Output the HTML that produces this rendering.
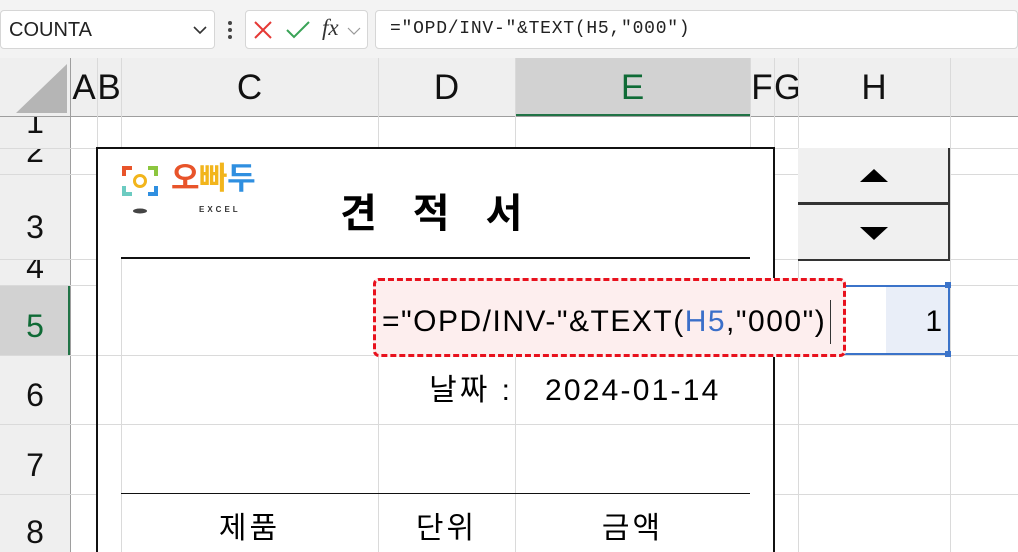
<!DOCTYPE html>
<html style="width:1018px;height:552px;overflow:hidden"><head><meta charset="utf-8">
<style>
*{margin:0;padding:0;box-sizing:border-box}
body{width:1018px;height:552px;overflow:hidden;background:#fff;position:relative;font-family:"Liberation Sans","Noto Sans CJK KR",sans-serif;color:#000}
.a{position:absolute}
.hdr{background:#efefef}
.vl{position:absolute;width:1px;background:#dadada}
.hl{position:absolute;height:1px;background:#dadada}
.ch{position:absolute;top:58px;height:59px;font-size:35px;line-height:60px;text-align:center;color:#111}
.rh{position:absolute;left:0;width:70px;font-size:32px;text-align:center;color:#111;overflow:hidden}
</style></head><body>
<div class="a" style="left:0;top:0;width:1018px;height:58px;background:#f3f3f3"></div>
<div class="a" style="left:0;top:10px;width:215px;height:39px;background:#fff;border:1px solid #d6d6d6;border-radius:4px"></div>
<div class="a" style="left:9px;top:19px;font-size:20px;color:#222">COUNTA</div>
<svg class="a" style="left:192px;top:24px" width="16" height="12"><path d="M2 3 L8 9 L14 3" fill="none" stroke="#333" stroke-width="1.6"/></svg>
<div class="a" style="left:228px;top:21px;width:4px;height:4px;background:#444;border-radius:2px"></div>
<div class="a" style="left:228px;top:28px;width:4px;height:4px;background:#444;border-radius:2px"></div>
<div class="a" style="left:228px;top:35px;width:4px;height:4px;background:#444;border-radius:2px"></div>
<div class="a" style="left:245px;top:10px;width:123px;height:39px;background:#fff;border:1px solid #d6d6d6;border-radius:4px"></div>
<svg class="a" style="left:253px;top:20px" width="20" height="20"><path d="M2 2 L18 18 M18 2 L2 18" stroke="#e53935" stroke-width="2"/></svg>
<svg class="a" style="left:285px;top:20px" width="26" height="20"><path d="M2 10 L9 17 L24 2" fill="none" stroke="#3aa357" stroke-width="2"/></svg>
<div class="a" style="left:322px;top:15px;font-family:'Liberation Serif',serif;font-style:italic;font-size:23px;color:#333">fx</div>
<svg class="a" style="left:347px;top:26px" width="14" height="10"><path d="M1 2 L7 8 L13 2" fill="none" stroke="#999" stroke-width="1.2"/></svg>
<div class="a" style="left:375px;top:10px;width:643px;height:39px;background:#fff;border:1px solid #d6d6d6;border-radius:4px"></div>
<div class="a" style="left:390px;top:19px;font-family:'Liberation Mono',monospace;font-size:18px;letter-spacing:0.75px;color:#222">="OPD/INV-"&amp;TEXT(H5,"000")</div>

<div class="a hdr" style="left:0;top:58px;width:1018px;height:59px"></div>
<div class="a" style="left:515px;top:58px;width:235px;height:59px;background:#d2d2d2"></div>
<div class="a" style="left:515px;top:114px;width:235px;height:3px;background:#217346"></div>
<svg class="a" style="left:16px;top:64px" width="52" height="50"><path d="M51 0 L51 49 L0 49 Z" fill="#b5b5b5"/></svg>
<div class="a" style="left:0;top:116px;width:1018px;height:1px;background:#9e9e9e"></div>
<div class="a" style="left:70px;top:58px;width:1px;height:494px;background:#9e9e9e"></div>
<div class="ch" style="left:71px;width:26px">A</div>
<div class="ch" style="left:97px;width:24px">B</div>
<div class="ch" style="left:121px;width:257px">C</div>
<div class="ch" style="left:378px;width:137px">D</div>
<div class="ch" style="left:515px;width:235px;color:#0f6b36">E</div>
<div class="ch" style="left:750px;width:24px">F</div>
<div class="ch" style="left:774px;width:24px">G</div>
<div class="ch" style="left:798px;width:152px">H</div>
<div class="vl" style="left:97px;top:58px;height:494px"></div>
<div class="vl" style="left:121px;top:58px;height:494px"></div>
<div class="vl" style="left:378px;top:58px;height:494px"></div>
<div class="vl" style="left:515px;top:58px;height:494px"></div>
<div class="vl" style="left:750px;top:58px;height:494px"></div>
<div class="vl" style="left:774px;top:58px;height:494px"></div>
<div class="vl" style="left:798px;top:58px;height:494px"></div>
<div class="vl" style="left:950px;top:58px;height:494px"></div>

<div class="a hdr" style="left:0;top:117px;width:70px;height:435px"></div>
<div class="a" style="left:0;top:285px;width:70px;height:70px;background:#d2d2d2"></div>
<div class="a" style="left:68px;top:285px;width:2px;height:70px;background:#217346"></div>
<div class="a" style="left:70px;top:117px;width:1px;height:435px;background:#9e9e9e"></div>
<div class="rh" style="top:117px;height:31px;line-height:10px">1</div>
<div class="rh" style="top:148px;height:26px;line-height:6px">2</div>
<div class="rh" style="top:174px;height:85px;line-height:106px">3</div>
<div class="rh" style="top:259px;height:26px;line-height:16px">4</div>
<div class="rh" style="top:285px;height:70px;line-height:82px;color:#0f6b36">5</div>
<div class="rh" style="top:355px;height:69px;line-height:80px">6</div>
<div class="rh" style="top:424px;height:70px;line-height:82px">7</div>
<div class="rh" style="top:494px;height:58px;line-height:76px">8</div>
<div class="hl" style="left:0;top:148px;width:1018px"></div>
<div class="hl" style="left:0;top:174px;width:1018px"></div>
<div class="hl" style="left:0;top:259px;width:1018px"></div>
<div class="hl" style="left:0;top:285px;width:1018px"></div>
<div class="hl" style="left:0;top:355px;width:1018px"></div>
<div class="hl" style="left:0;top:424px;width:1018px"></div>
<div class="hl" style="left:0;top:494px;width:1018px"></div>

<div class="a" style="left:98px;top:149px;width:675px;height:403px;background:#fff"></div>
<div class="a" style="left:96px;top:147px;width:679px;height:420px;border:2px solid #111"></div>
<div class="vl" style="left:121px;top:259px;height:293px"></div>
<div class="vl" style="left:378px;top:355px;height:197px"></div>
<div class="vl" style="left:515px;top:355px;height:197px"></div>
<div class="hl" style="left:98px;top:355px;width:675px"></div>
<div class="hl" style="left:98px;top:424px;width:675px"></div>
<div class="a" style="left:121px;top:257px;width:629px;height:2px;background:#111"></div>
<div class="a" style="left:121px;top:493px;width:629px;height:1px;background:#111"></div>

<svg class="a" style="left:121px;top:163px" width="42" height="56">
<path d="M3 13 V5 H11" fill="none" stroke="#e8542a" stroke-width="4"/>
<path d="M27 5 H35 V13" fill="none" stroke="#8cc63f" stroke-width="4"/>
<path d="M3 23 V31 H11" fill="none" stroke="#6ccbc1" stroke-width="4"/>
<path d="M27 31 H35 V23" fill="none" stroke="#2f8fe0" stroke-width="4"/>
<circle cx="19" cy="18" r="5.5" fill="none" stroke="#f2b51c" stroke-width="3"/>
<ellipse cx="19" cy="48" rx="7" ry="2.5" fill="#444"/>
</svg>
<div class="a" style="left:171px;top:161px;font-size:31px;font-weight:bold;letter-spacing:-0.5px;line-height:36px"><span style="color:#e8542a">오</span><span style="color:#f2b51c">빠</span><span style="color:#2f8fe0">두</span></div>
<div class="a" style="left:199px;top:205px;font-size:8px;font-weight:bold;letter-spacing:3px;color:#333">EXCEL</div>

<div class="a" style="left:340px;top:188px;font-size:40px;font-weight:bold;letter-spacing:36px;line-height:52px">견적서</div>

<div class="a" style="left:798px;top:148px;width:152px;height:56px;background:#f0f0f0;border-right:2px solid #333;border-bottom:2px solid #333"></div>
<div class="a" style="left:798px;top:204px;width:152px;height:57px;background:#f0f0f0;border-right:2px solid #333;border-bottom:2px solid #333;border-top:1px solid #333"></div>
<svg class="a" style="left:858px;top:168px" width="32" height="16"><path d="M2 14 L16 1 L30 14 Z" fill="#000"/></svg>
<svg class="a" style="left:858px;top:226px" width="32" height="16"><path d="M2 1 L30 1 L16 14 Z" fill="#000"/></svg>

<div class="a" style="left:886px;top:287px;width:62px;height:66px;background:#e9eef8"></div>
<div class="a" style="left:798px;top:285px;width:152px;height:70px;border:2px solid #3b73c9"></div>
<div class="a" style="left:945px;top:282px;width:6px;height:6px;background:#3b73c9"></div>
<div class="a" style="left:945px;top:351px;width:6px;height:6px;background:#3b73c9"></div>
<div class="a" style="left:880px;top:300px;width:62px;text-align:right;font-size:30px;line-height:44px">1</div>

<div class="a" style="left:515px;top:284px;width:232px;height:2px;background:#217346"></div>
<div class="a" style="left:515px;top:354px;width:232px;height:3px;background:#217346"></div>

<div class="a" style="left:373px;top:278px;width:473px;height:79px;background:#fdeeee;border:3px dashed #e8111d;border-radius:6px"></div>
<div class="a" style="left:382px;top:300px;font-size:30px;line-height:44px;white-space:nowrap;letter-spacing:1.5px">="OPD/INV-"&amp;TEXT(<span style="color:#3b6fc9">H5</span>,"000")</div>
<div class="a" style="left:830px;top:300px;width:1px;height:44px;background:#333"></div>

<div class="a" style="left:378px;top:370px;width:137px;text-align:right;padding-right:2px;font-size:30px;line-height:42px;letter-spacing:3px">날짜 :</div>
<div class="a" style="left:545px;top:370px;font-size:30px;line-height:42px;letter-spacing:2.2px">2024-01-14</div>

<div class="a" style="left:121px;top:508px;width:257px;text-align:center;font-size:30px;line-height:42px;letter-spacing:3px">제품</div>
<div class="a" style="left:378px;top:508px;width:137px;text-align:center;font-size:30px;line-height:42px;letter-spacing:3px">단위</div>
<div class="a" style="left:515px;top:508px;width:235px;text-align:center;font-size:30px;line-height:42px;letter-spacing:3px">금액</div>
</body></html>
